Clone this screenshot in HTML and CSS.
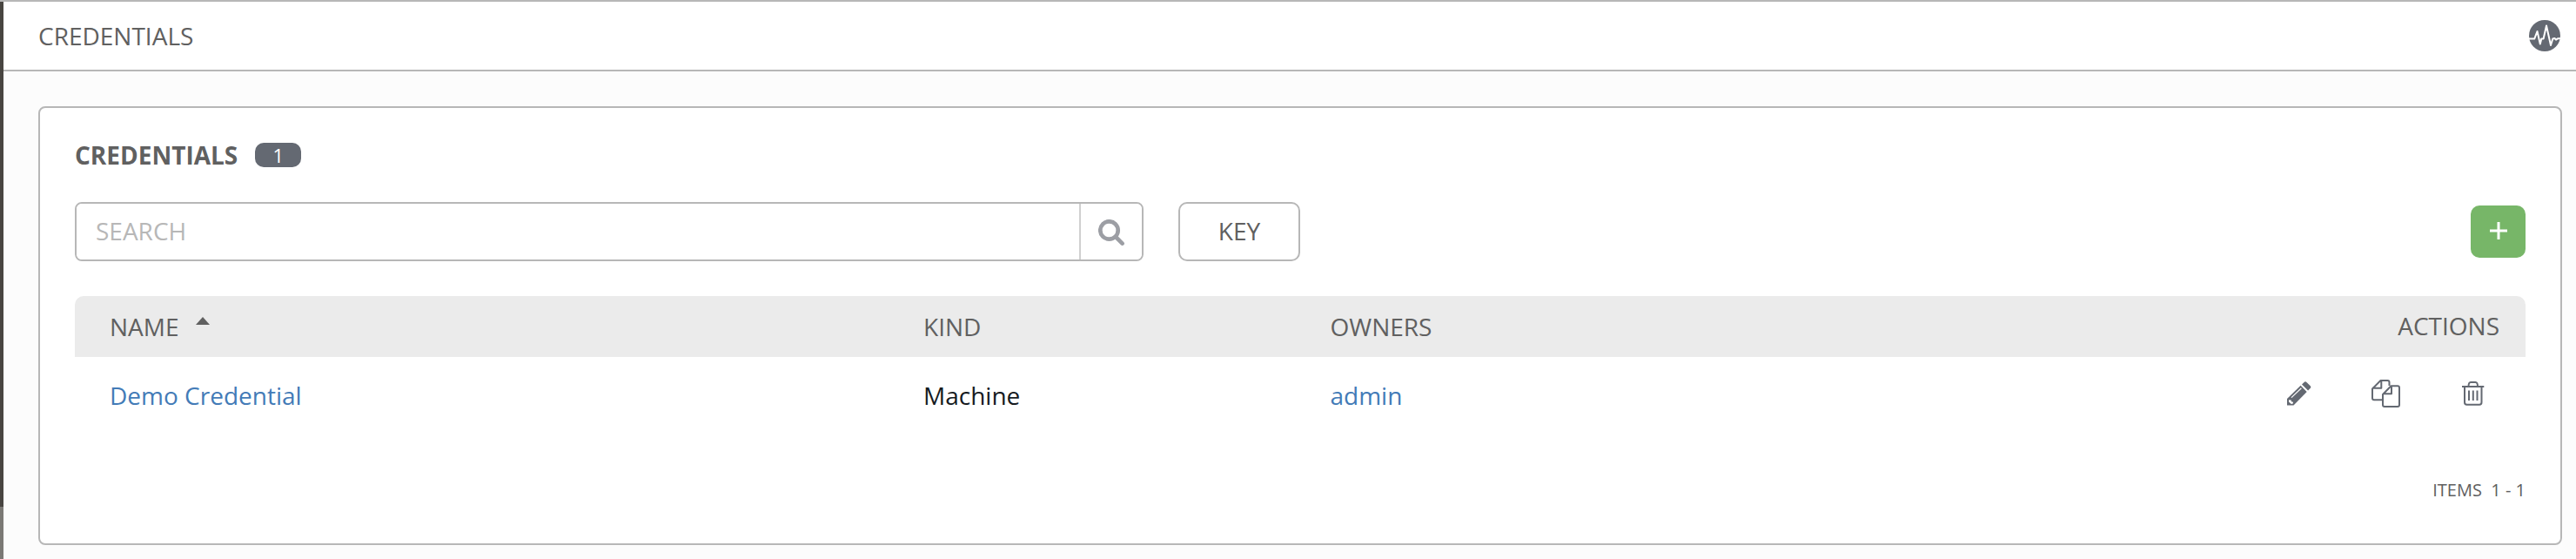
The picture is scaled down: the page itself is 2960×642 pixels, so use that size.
FILE: index.html
```html
<!DOCTYPE html>
<html lang="en">
<head>
<meta charset="utf-8">
<title>Credentials</title>
<link rel="stylesheet" href="styles.css">
</head>
<body>
<div class="app">
  <aside class="rail"><div class="rail-menu"></div></aside>
  <main class="main">
    <header class="topbar">
      <span class="crumb">CREDENTIALS</span>
      <svg class="activity" viewBox="0 0 36 36"><circle cx="18" cy="18" r="18" fill="#646972"/><path d="M0 21.6H6.2L9.5 13L12.8 27.5L14.3 21.5H16.6L20 6.5L25 29L27.3 21.5L29.5 21L31 22.6L33 21.3H36" fill="none" stroke="#fff" stroke-width="2" stroke-linejoin="round"/></svg>
    </header>
    <section class="card">
      <div class="title-row"><h1 class="title">CREDENTIALS</h1><span class="badge">1</span></div>
      <div class="tools">
        <div class="search">
          <input class="search-input" placeholder="SEARCH" aria-label="Search">
          <button class="search-btn" aria-label="Search"><svg width="30" height="30" viewBox="0 0 30 30" fill="none" stroke="#9c9ea4"><circle cx="12.5" cy="12.5" r="10.2" stroke-width="4.7"/><path d="M20 20L27.6 27.6" stroke-width="4.6" stroke-linecap="round"/></svg></button>
        </div>
        <button class="key">KEY</button>
        <button class="add" aria-label="Add"><svg width="20" height="20" viewBox="0 0 20 20"><path d="M10 0V20M0 10H20" stroke="#fff" stroke-width="3"/></svg></button>
      </div>
      <div class="grid head">
        <span class="cell">NAME <i class="caret"></i></span><span class="cell">KIND</span><span class="cell">OWNERS</span><span class="cell head-actions">ACTIONS</span>
      </div>
      <div class="grid row">
        <a class="cell link">Demo Credential</a><span class="cell">Machine</span><a class="cell link">admin</a>
        <span class="cell actions">
          <svg width="28" height="28" viewBox="0 0 28 28" fill="#646972"><path d="M0 20L15.6 4.8L22.7 12L7.5 27.5H0Z"/><path d="M17 3.4L19.6 .9Q21 -.3 22.4 .9L26.8 5.2Q27.8 6.5 26.8 7.8L24.1 10.5Z"/><path d="M5 18.6L16.4 7.8" stroke="#fff" stroke-width="1.2"/><path d="M2 21.2L4.6 21.5L5 23.3L7 23.7L6.8 25.6L4.8 26L2 23.4Z" fill="#fff"/></svg>
          <svg width="34" height="34" viewBox="0 0 34 34" fill="none" stroke="#646972" stroke-width="2" stroke-linejoin="round"><path d="M12.5 24.3H3Q1 24.3 1 22.3V11.5L10.5 2H18.5Q20.5 2 20.5 4V8M11.3 2V10.8H1"/><path d="M13 18L22.5 8.2H30Q32 8.2 32 10.2V30Q32 32 30 32H15Q13 32 13 30ZM23 8.2V17.3H13"/></svg>
          <svg width="26" height="28" viewBox="0 0 26 28" fill="none" stroke="#646972" stroke-width="2"><path d="M0 6H25.3M7.5 6Q7.5 1 10 1H15.5Q18 1 18 6M3 6V24Q3 26.8 5.5 26.8H20Q22.5 26.8 22.5 24V6M8 10.5V22M12.8 10.5V22M17.5 10.5V22"/></svg>
        </span>
      </div>
      <div class="pager">ITEMS&nbsp; 1 - 1</div>
    </section>
  </main>
</div>
</body>
</html>
```
FILE: styles.css
```css
* { box-sizing: border-box; }
body { margin: 0; background: #fcfcfc; color: #606060; font: 28px/40px "Open Sans", "Noto Sans", sans-serif; }
.app { display: flex; height: 642px; border-top: 2px solid #b7b7b7; }
.rail { width: 4px; background: #7b7975; }
.rail-menu { height: 580px; background: #484541; }
.main { flex: 1; }
.topbar { height: 80px; padding: 0 18px 0 40px; display: flex; align-items: center; justify-content: space-between; background: #fff; border-bottom: 2px solid #b7b7b7; }
.activity { width: 36px; height: 36px; }
.card { height: 504px; margin: 40px 16px 0 40px; padding: 34px 40px 0; background: #fff; border: 2px solid #b7b7b7; border-radius: 8px; }
.title-row { display: flex; align-items: center; height: 40px; gap: 20px; }
.title { margin: 0; font-size: 28px; line-height: 40px; font-weight: 700; }
.badge { width: 53px; height: 28px; border-radius: 10px; background: #646972; color: #fff; font-size: 22px; line-height: 28px; text-align: center; }
.tools { display: flex; align-items: center; height: 68px; margin-top: 34px; }
.search { display: flex; width: 1228px; height: 68px; border: 2px solid #b7b7b7; border-radius: 8px; overflow: hidden; }
.search-input { flex: 1; border: 0; padding: 0 22px 2px; font: inherit; background: #fff; outline: 0; }
.search-input::placeholder { color: #b7b7b7; opacity: 1; }
.search-btn { width: 72px; padding: 2px 0 0; border: 0; border-left: 2px solid #d0d0d0; background: #fff; display: flex; align-items: center; justify-content: center; }
.key { width: 140px; height: 68px; margin-left: 40px; padding: 0 0 3px; border: 2px solid #b7b7b7; border-radius: 10px; background: #fff; color: #606060; font: inherit; }
.add { width: 63px; height: 60px; margin-left: auto; padding: 0 0 2px; border: 0; border-radius: 10px; background: #77b668; display: flex; align-items: center; justify-content: center; }
.grid { display: grid; grid-template-columns: 935px 467.5px 1fr auto; align-items: center; padding-left: 40px; }
.head { height: 70px; margin-top: 40px; background: #ebebeb; border-radius: 10px 10px 0 0; }
.head-actions { padding: 0 30px 2px 0; }
.caret { display: inline-block; margin-left: 12px; vertical-align: 13px; border: 8px solid transparent; border-top: 0; border-bottom: 9px solid #606060; }
.row { height: 88px; color: #161b1f; }
.link { color: #437bb7; }
.actions { display: flex; align-items: center; gap: 70px; padding: 0 47px 4px 0; }
.actions svg:first-child { margin-right: -1px; }
.pager { margin-top: 45px; font-size: 20px; text-align: right; }
```
